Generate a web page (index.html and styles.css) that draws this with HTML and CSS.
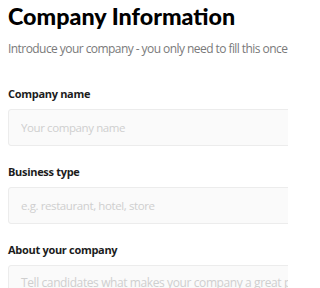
FILE: index.html
```html
<!DOCTYPE html>
<html>
<head>
<meta charset="utf-8">
<link rel="stylesheet" href="styles.css">
</head>
<body>
<div class="page">
  <h1 class="title">Company Information</h1>
  <p class="subtitle">Introduce your company - you only need to fill this once</p>
  <form class="form">
    <div class="field">
      <label class="label">Company name</label>
      <input class="input" type="text" placeholder="Your company name">
    </div>
    <div class="field">
      <label class="label">Business type</label>
      <input class="input" type="text" placeholder="e.g. restaurant, hotel, store">
    </div>
    <div class="field">
      <label class="label">About your company</label>
      <textarea class="input textarea" placeholder="Tell candidates what makes your company a great place to work"></textarea>
    </div>
  </form>
</div>
</body>
</html>
```
FILE: styles.css
```css
html, body {
  margin: 0;
  padding: 0;
  background: #ffffff;
}
.page {
  box-sizing: border-box;
  width: 288px;
  height: 288px;
  overflow: hidden;
  padding: 2px 0 0 8px;
  font-family: "Open Sans", "Noto Sans", sans-serif;
}
.title {
  margin: 0;
  font-family: "Lato", sans-serif;
  font-weight: 900;
  font-size: 23.3px;
  line-height: 28px;
  color: #000;
  white-space: nowrap;
}
.subtitle {
  margin: 10px 0 0 0;
  font-size: 12px;
  letter-spacing: -0.56px;
  line-height: 18px;
  color: #7a7a7a;
  white-space: nowrap;
}
.form {
  margin-top: 28px;
  display: flex;
  flex-direction: column;
  gap: 18px;
  width: 320px;
}
.field {
  display: flex;
  flex-direction: column;
  gap: 7px;
}
.label {
  font-size: 11px;
  font-weight: 700;
  letter-spacing: -0.3px;
  line-height: 16px;
  color: #1c1c1c;
}
.input {
  box-sizing: border-box;
  height: 37px;
  width: 100%;
  margin: 0;
  padding: 0 12px;
  border: 1px solid #ececec;
  border-radius: 3px;
  background: #fafafa;
  font-family: "Open Sans", "Noto Sans", sans-serif;
  font-size: 11.5px;
  letter-spacing: -0.4px;
  outline: none;
}
.input::placeholder {
  color: #cfcfcf;
}
.textarea {
  height: 80px;
  padding-top: 9px;
  line-height: 16px;
  font-size: 12px;
  letter-spacing: -0.4px;
  resize: none;
}
```
